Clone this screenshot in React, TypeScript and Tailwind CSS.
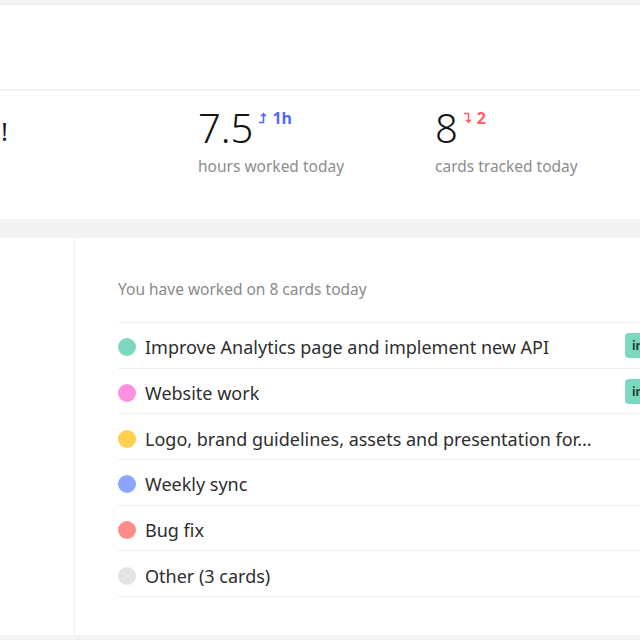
import { ReactNode } from 'react';

type Card = { title: string; color: string; status?: string };

const cards: Card[] = [
    { title: 'Improve Analytics page and implement new API', color: 'bg-[#7dd8c0]', status: 'in progress' },
    { title: 'Website work', color: 'bg-[#ff8fe0]', status: 'in progress' },
    { title: 'Logo, brand guidelines, assets and presentation for...', color: 'bg-[#ffd04f]' },
    { title: 'Weekly sync', color: 'bg-[#8ca6ff]' },
    { title: 'Bug fix', color: 'bg-[#ff8c86]' },
    { title: 'Other (3 cards)', color: 'bg-[#e3e3e3]' },
];

function ArrowUp() {
    return (
        <svg width="9" height="12" viewBox="0 0 9 12" fill="none" stroke="currentColor" strokeWidth="1.6">
            <path d="M1 10.5 H5.5 V2" />
            <path d="M3.2 4.2 L5.5 1.6 L7.8 4.2" />
        </svg>
    );
}

function ArrowDown() {
    return (
        <svg width="9" height="12" viewBox="0 0 9 12" fill="none" stroke="currentColor" strokeWidth="1.6">
            <path d="M1 1.5 H5.5 V10" />
            <path d="M3.2 7.8 L5.5 10.4 L7.8 7.8" />
        </svg>
    );
}

function Stat({ value, delta, icon, deltaColor, label, width }: { value: string; delta: string; icon: ReactNode; deltaColor: string; label: string; width: string }) {
    return (
        <div className={`${width} shrink-0 flex flex-col`}>
            <div className="flex items-start">
                <span className="text-[40px] leading-[41px] font-light text-[#151515]">{value}</span>
                <span className={`ml-[5px] mt-[1px] flex items-center gap-[5px] text-[16px] leading-[20px] font-bold ${deltaColor}`}>
                    {icon}
                    {delta}
                </span>
            </div>
            <span className="mt-[8px] text-[15.5px] leading-[20px] text-[#8d8d8d]">{label}</span>
        </div>
    );
}

export default function App() {
    return (
        <div className="w-[640px] h-[640px] overflow-hidden bg-[#f3f3f3] font-['Noto_Sans',sans-serif] pt-[5px]">
            {/* header */}
            <div className="h-[84px] w-[900px] bg-white shadow-[0_-1px_2px_rgba(0,0,0,0.04)]" />

            {/* stats */}
            <div className="mt-[2px] h-[128px] w-[900px] bg-white flex pt-[16px]">
                <div className="w-[198px] shrink-0 pt-[9px]">
                    <div className="w-[8px] flex justify-end">
                        <span className="whitespace-nowrap text-[26px] leading-[30px] text-[#222]">Good morning, Anna!</span>
                    </div>
                </div>
                <Stat value="7.5" delta="1h" icon={<ArrowUp />} deltaColor="text-[#5468ff]" label="hours worked today" width="w-[237px]" />
                <Stat value="8" delta="2" icon={<ArrowDown />} deltaColor="text-[#ff5c6c]" label="cards tracked today" width="w-[237px]" />
            </div>

            {/* cards panel */}
            <div className="mt-[19px] h-[397px] w-[900px] bg-white flex">
                <div className="w-[75px] shrink-0 border-r border-[#ededed]" />
                <div className="pl-[43px] pt-[41px] w-[600px]">
                    <p className="text-[15.5px] leading-[20px] text-[#8a8a8a]">You have worked on 8 cards today</p>
                    <ul className="mt-[23px] border-b border-[#efefef]">
                        {cards.map(card => (
                            <li key={card.title} className="h-[45.7px] border-t border-[#efefef] flex items-center pt-[4px]">
                                <span className={`w-[18px] h-[18px] rounded-full shrink-0 ${card.color}`} />
                                <div className="ml-[9px] w-[480px] shrink-0">
                                    <p className="max-w-[470px] truncate text-[18px] leading-[24px] text-[#2e2e2e]">{card.title}</p>
                                </div>
                                {card.status && (
                                    <span className="h-[25px] px-[7px] -mt-[3px] flex items-center rounded-[4px] bg-[#7dd8c0] text-[12px] font-bold text-[#25443c] whitespace-nowrap">
                                        {card.status}
                                    </span>
                                )}
                            </li>
                        ))}
                    </ul>
                </div>
            </div>
        </div>
    );
}
